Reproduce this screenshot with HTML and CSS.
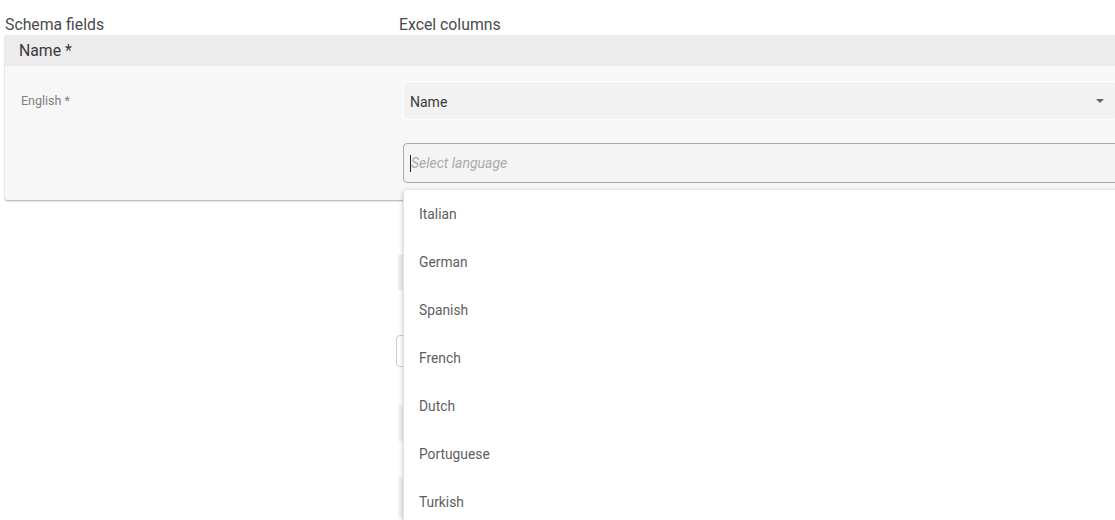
FILE: index.html
```html
<!DOCTYPE html>
<html>
<head>
<meta charset="utf-8">
<link rel="stylesheet" href="styles.css">
</head>
<body>
<div class="page">
  <div class="headers">
    <div class="h-left">Schema fields</div>
    <div class="h-right">Excel columns</div>
  </div>
  <div class="card">
    <div class="card-head">Name *</div>
    <div class="card-body">
      <div class="label">English *</div>
      <div class="fields">
        <div class="select">
          <span>Name</span>
          <svg class="arrow" width="8" height="4" viewBox="0 0 8 4"><path d="M0 0h8L4 4z" fill="#666"/></svg>
        </div>
        <div class="input"><span class="caret"></span><span class="ph">Select language</span></div>
      </div>
    </div>
  </div>
  <div class="behind">
    <div class="b1"></div>
    <div class="b2"></div>
    <div class="b3"></div>
    <div class="b4"></div>
  </div>
</div>
<ul class="dropdown">
  <li>Italian</li>
  <li>German</li>
  <li>Spanish</li>
  <li>French</li>
  <li>Dutch</li>
  <li>Portuguese</li>
  <li>Turkish</li>
</ul>
</body>
</html>
```
FILE: styles.css
```css
html, body {
  margin: 0;
  padding: 0;
  background: #fff;
  overflow: hidden;
  height: 520px;
}
body {
  font-family: Roboto, "Noto Sans", sans-serif;
  color: #333;
  position: relative;
}
.page {
  padding-left: 5px;
  width: 1130px;
}
.headers {
  display: flex;
  padding-top: 15px;
  height: 20px;
  font-size: 15.8px;
  line-height: 19px;
  color: #4a4a4a;
}
.h-left { width: 394px; }
.card {
  background: #f7f7f7;
  box-shadow: 0 1px 2px rgba(0,0,0,0.35);
  border-radius: 2px;
}
.card-head {
  background: #ececec;
  height: 31px;
  line-height: 31px;
  padding-left: 14px;
  font-size: 15.8px;
  color: #3a3a3a;
}
.card-body {
  display: flex;
  height: 134px;
}
.label {
  width: 382px;
  padding: 28px 0 0 16px;
  font-size: 12.5px;
  line-height: 14px;
  color: #808080;
}
.fields {
  flex: 1;
  padding-top: 15px;
}
.select {
  height: 37px;
  background: #f2f2f2;
  border: 1px solid #fff;
  border-radius: 4px;
  display: flex;
  align-items: center;
  padding-left: 6px;
  font-size: 14px;
  color: #3a3a3a;
  width: 706px;
  position: relative;
}
.select span { padding-top: 2px; }
.arrow {
  position: absolute;
  left: 692px;
  top: 17px;
}
.input {
  margin-top: 23px;
  height: 38px;
  border: 1px solid #aaa;
  border-radius: 4px;
  background: #f4f4f4;
  display: flex;
  align-items: center;
  padding-left: 6px;
  font-size: 14px;
}
.caret {
  width: 1px;
  height: 17px;
  background: #222;
}
.ph {
  font-style: italic;
  color: #aaa;
}
.behind {
  margin-left: 393px;
  padding-top: 55px;
}
.b1 {
  width: 40px;
  height: 35px;
  background: #eee;
}
.b2 {
  margin-top: 45px;
  margin-left: -2px;
  width: 40px;
  height: 30px;
  border: 1px solid #ccc;
  border-radius: 4px;
}
.b3 {
  margin-top: 38px;
  width: 40px;
  height: 36px;
  background: #f2f2f2;
}
.b4 {
  margin-top: 36px;
  width: 40px;
  height: 40px;
  background: #f2f2f2;
}
.dropdown {
  position: absolute;
  left: 403px;
  top: 190px;
  width: 720px;
  margin: 0;
  padding: 0;
  list-style: none;
  background: #fff;
  box-shadow: 0 1px 4px rgba(0,0,0,0.25);
  border-left: 1px solid #e2e2e2;
  border-radius: 3px;
}
.dropdown li {
  height: 48px;
  line-height: 49px;
  padding-left: 15px;
  font-size: 13.8px;
  color: #5e5e5e;
}
```
